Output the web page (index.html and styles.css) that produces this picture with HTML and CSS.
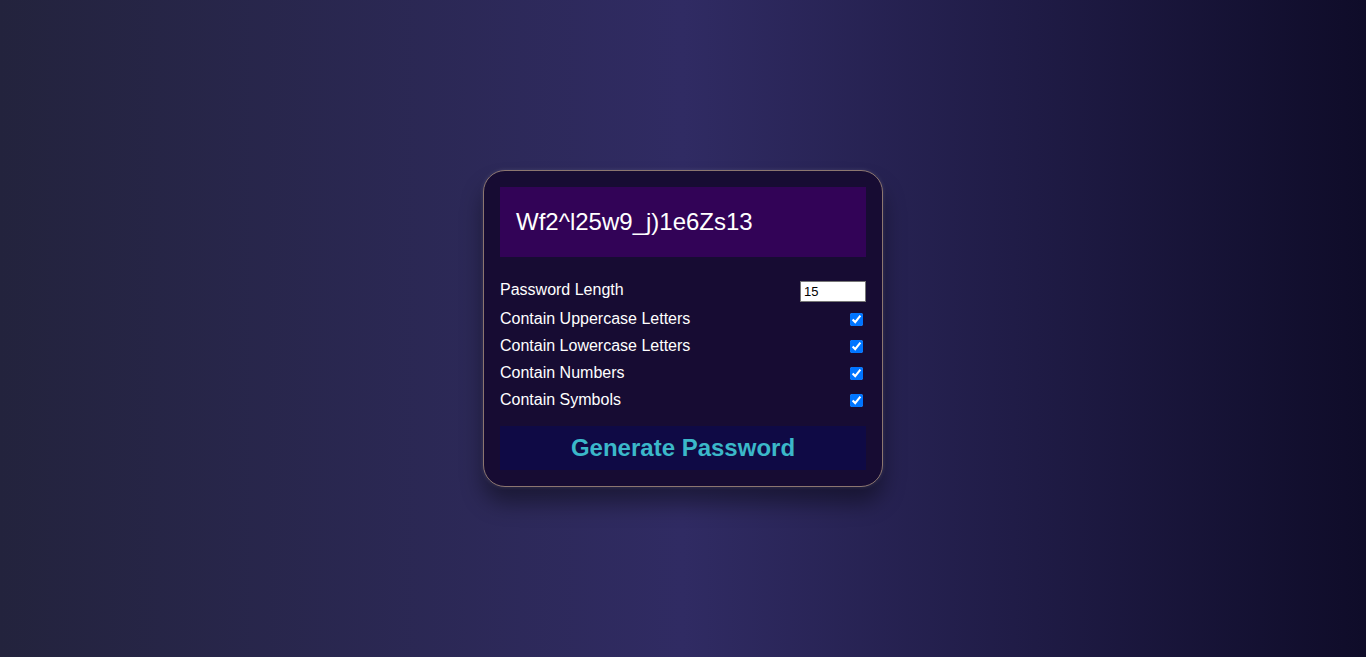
FILE: index.html
```html
<!DOCTYPE html>
<html lang="en">
<head>
<meta charset="UTF-8">
<title>Password Generator</title>
<link rel="stylesheet" href="styles.css">
</head>
<body>
  <div class="card">
    <div class="result">Wf2^l25w9_j)1e6Zs13</div>
    <div class="settings">
      <div class="row row-length">
        <label for="length">Password Length</label>
        <input type="number" id="length" class="length-input" value="15">
      </div>
      <div class="row">
        <label for="upper">Contain Uppercase Letters</label>
        <input type="checkbox" id="upper" checked>
      </div>
      <div class="row">
        <label for="lower">Contain Lowercase Letters</label>
        <input type="checkbox" id="lower" checked>
      </div>
      <div class="row">
        <label for="numbers">Contain Numbers</label>
        <input type="checkbox" id="numbers" checked>
      </div>
      <div class="row">
        <label for="symbols">Contain Symbols</label>
        <input type="checkbox" id="symbols" checked>
      </div>
    </div>
    <button class="generate">Generate Password</button>
  </div>
</body>
</html>
```
FILE: styles.css
```css
* { box-sizing: border-box; }
html, body { height: 100%; }
body {
  margin: 0;
  min-height: 100vh;
  display: flex;
  align-items: center;
  justify-content: center;
  font-family: "Liberation Sans", Arial, sans-serif;
  color: #fff;
  background: linear-gradient(to right, #23233d 0%, #302b63 50%, #0f0c29 100%);
}
.card {
  width: 400px;
  padding: 16px;
  border: 1px solid #8c7670;
  border-radius: 22px;
  background: #170c33;
  box-shadow: 0 0 4px rgba(255, 255, 255, 0.12), 0 16px 22px rgba(0, 0, 0, 0.4);
}
.result {
  height: 70px;
  padding: 0 16px;
  display: flex;
  align-items: center;
  background: #320357;
  font-size: 24px;
  color: #fff;
}
.settings {
  margin-top: 24px;
  display: flex;
  flex-direction: column;
  gap: 8px;
}
.row {
  display: flex;
  justify-content: space-between;
  align-items: flex-start;
  height: 19px;
  font-size: 16px;
  line-height: 17px;
}
.row-length {
  height: 21px;
  line-height: 18px;
}
.length-input {
  width: 66px;
  height: 21px;
  margin: 0;
  padding: 1px 3px;
  border: 1px solid #767676;
  font-family: "Liberation Sans", Arial, sans-serif;
  font-size: 13px;
  color: #000;
  background: #fff;
}
.row input[type="checkbox"] {
  width: 13px;
  height: 13px;
  margin: 3px 3px 3px 4px;
  accent-color: #0075ff;
}
.generate {
  display: block;
  width: 100%;
  height: 44px;
  margin-top: 16px;
  border: none;
  background: #0f0a45;
  color: #3bb8c9;
  font-family: "Liberation Sans", Arial, sans-serif;
  font-size: 24px;
  font-weight: bold;
  cursor: pointer;
}
```
